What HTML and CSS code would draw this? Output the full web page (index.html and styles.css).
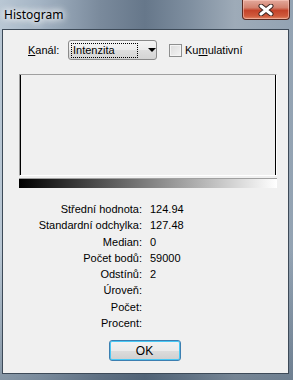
FILE: index.html
```html
<!DOCTYPE html>
<html lang="cs">
<head>
  <meta charset="UTF-8" />
  <meta name="viewport" content="width=device-width, initial-scale=1.0"/>
  <link rel="stylesheet" href="styles.css">
</head>
<body>

  <div class="window">
    <div class="titlebar">
      <span class="title">Histogram</span>
      <div class="close">
        <svg width="18" height="12" viewBox="0 0 18 12">
          <path d="M4 2 L14 10 M14 2 L4 10" stroke="#3a2420" stroke-width="5" stroke-linecap="round"/>
          <path d="M4 2 L14 10 M14 2 L4 10" stroke="#fff" stroke-width="3" stroke-linecap="round"/>
        </svg>
      </div>
    </div>

    <div class="client">
      <div class="channel-row">
        <span class="label"><u>K</u>anál:</span>
        <div class="select">
          <span class="focus">Intenzita</span>
          <span class="arrow"></span>
        </div>
        <span class="check"><span class="box"></span>Ku<u>m</u>ulativní</span>
      </div>

      <div class="plot"></div>
      <div class="scale"></div>

      <div class="stats">
        <span>Střední hodnota:</span><span>124.94</span>
        <span>Standardní odchylka:</span><span>127.48</span>
        <span>Median:</span><span>0</span>
        <span>Počet bodů:</span><span>59000</span>
        <span>Odstínů:</span><span>2</span>
        <span>Úroveň:</span><span></span>
        <span>Počet:</span><span></span>
        <span>Procent:</span><span></span>
      </div>

      <div class="actions">
        <div class="btn">OK</div>
      </div>
    </div>
  </div>

</body>
</html>
```

FILE: styles.css
```css
* {
  margin: 0;
  padding: 0;
  box-sizing: border-box;
}

html, body {
  width: 100%;
  height: 100%;
  overflow: hidden;
}

body {
  font-family: "Liberation Sans", Arial, sans-serif;
  font-size: 11px;
  color: #000;
}

.window {
  width: 293px;
  height: 380px;
  display: flex;
  flex-direction: column;
  padding: 0 4px 6px 2px;
  background:
    linear-gradient(to bottom, rgba(0,0,0,0) 0, rgba(0,0,0,0) 250px, rgba(40,60,80,0.35) 380px),
    linear-gradient(to right, #b9c7d4 0, #a4b4c4 40px, #7a8a9c 100px, #66778a 145px, #7f8fa0 190px, #9eabb8 235px, #93a3b3 293px);
}

.titlebar {
  height: 29px;
  flex: none;
  display: flex;
  justify-content: space-between;
  align-items: flex-start;
}

.title {
  font-family: "Noto Sans", "Open Sans", sans-serif;
  font-size: 12px;
  margin: 6px 0 0 2px;
  color: #000;
  text-shadow: 0 0 6px #fff, 0 0 8px #fff, 0 0 10px #fff;
}

.close {
  width: 48px;
  height: 20px;
  margin-right: -1px;
  display: flex;
  align-items: center;
  justify-content: center;
  border: 1px solid #5a2a22;
  border-top: none;
  border-radius: 0 0 4px 4px;
  background: linear-gradient(to bottom, #e3a99c 0, #d3826f 40%, #c4432a 55%, #d05a3c 85%, #e08a68 100%);
  box-shadow: inset 0 0 0 1px rgba(255,210,200,0.5);
}

.client {
  flex: 1;
  background: #f0f0f0;
  border: 1px solid #3d4a58;
  display: flex;
  flex-direction: column;
  padding: 10px 0 0 16px;
}

.channel-row {
  display: flex;
  align-items: center;
  height: 20px;
}

.channel-row .label {
  margin-left: 9px;
  width: 40px;
}

.select {
  width: 89px;
  height: 20px;
  border: 1px solid #8a8a8a;
  border-radius: 3px;
  background: linear-gradient(to bottom, #f4f4f4 0, #ececec 50%, #dfdfdf 50%, #d4d4d4 100%);
  display: flex;
  align-items: center;
  padding: 0 0 0 2px;
}

.focus {
  width: 67px;
  height: 15px;
  border: 1px dotted #000;
  padding-left: 1px;
  line-height: 13px;
}

.arrow {
  margin-left: 10px;
  width: 0;
  height: 0;
  border-left: 4px solid transparent;
  border-right: 4px solid transparent;
  border-top: 4px solid #000;
}

.check {
  display: flex;
  align-items: center;
  margin-left: 12px;
}

.box {
  width: 13px;
  height: 13px;
  border: 1px solid #8e8f8f;
  background: linear-gradient(135deg, #dcdcdc 0, #f4f4f4 100%);
  box-shadow: inset 0 0 0 1px #f4f4f4;
  margin-right: 3px;
}

.plot {
  width: 258px;
  height: 102px;
  margin-top: 14px;
  border-top: 1px solid #a0a0a0;
  border-left: 1px solid #a0a0a0;
  border-right: 1px solid #fff;
  border-bottom: 1px solid #fff;
  box-shadow: inset 1px 0 0 #000, inset -1px 0 0 #000;
}

.scale {
  width: 258px;
  height: 10px;
  margin-top: 2px;
  border-top: 1px solid #a0a0a0;
  background: linear-gradient(to right, #000 0, #fff 100%);
}

.stats {
  display: grid;
  grid-template-columns: 123px 1fr;
  column-gap: 8px;
  margin: 13px 0 0 -16px;
  padding-left: 16px;
  line-height: 16.3px;
}

.stats span:nth-child(odd) {
  text-align: right;
}

.actions {
  display: flex;
  justify-content: center;
  margin: 9px 0 0 -16px;
  padding-right: 2px;
}

.btn {
  width: 72px;
  height: 21px;
  border: 1px solid #3c7fb1;
  border-radius: 3px;
  display: flex;
  align-items: center;
  justify-content: center;
  background: linear-gradient(to bottom, #f2f2f2 0, #ebebeb 50%, #dddddd 50%, #cfcfcf 100%);
  box-shadow: inset 0 0 0 1px #48c8f5;
  font-size: 12px;
}
```
